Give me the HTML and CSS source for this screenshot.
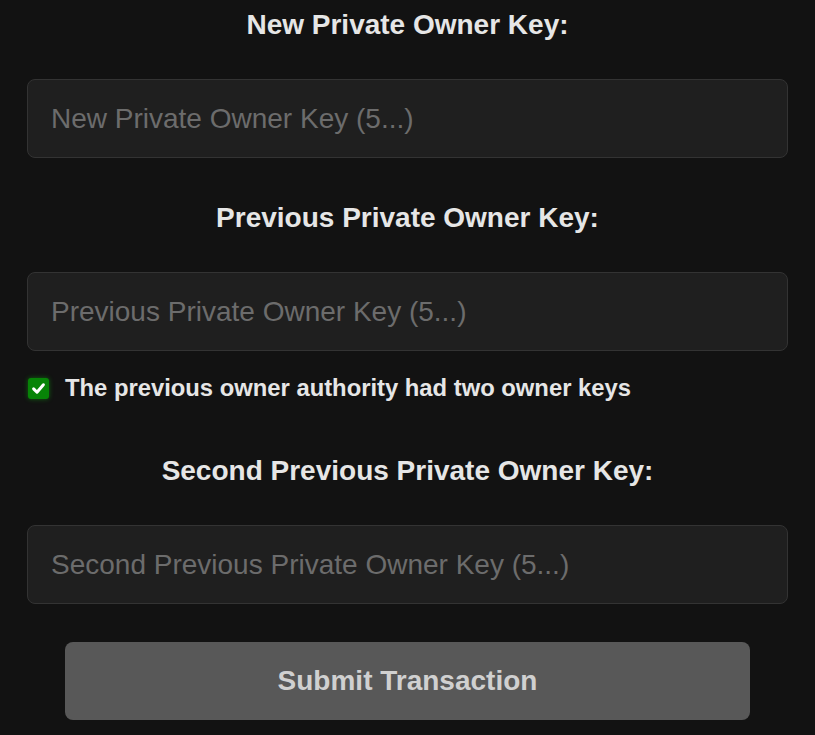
FILE: index.html
```html
<!DOCTYPE html>
<html lang="en">
<head>
  <meta charset="UTF-8" />
  <title>Change Owner Key</title>
  <meta name="viewport" content="width=device-width, initial-scale=1" />
  <link rel="stylesheet" href="styles.css">
</head>
<body>
  <form class="key-form">
    <label class="field-label" for="newKey">New Private Owner Key:</label>
    <input class="key-input" type="text" id="newKey" placeholder="New Private Owner Key (5...)" />

    <label class="field-label" for="prevKey">Previous Private Owner Key:</label>
    <input class="key-input" type="text" id="prevKey" placeholder="Previous Private Owner Key (5...)" />

    <label class="check-row">
      <span class="check-box">
        <svg viewBox="0 0 20 20" width="15" height="15"><path d="M3.5 10.5 L8 15 L16.5 5" fill="none" stroke="#fff" stroke-width="4" stroke-linecap="round" stroke-linejoin="round"/></svg>
      </span>
      <span>The previous owner authority had two owner keys</span>
    </label>

    <label class="field-label" for="secondKey">Second Previous Private Owner Key:</label>
    <input class="key-input" type="text" id="secondKey" placeholder="Second Previous Private Owner Key (5...)" />

    <button type="submit" class="submit-btn">Submit Transaction</button>
  </form>
</body>
</html>
```

FILE: styles.css
```css
body {
  margin: 0;
  background: #121212;
  color: #e6e6e6;
  font-family: 'Liberation Sans', Arial, sans-serif;
}
.key-form {
  display: flex;
  flex-direction: column;
  padding: 0 27px;
}
.field-label {
  display: block;
  text-align: center;
  font-weight: 700;
  font-size: 28px;
  line-height: 32px;
  margin: 9px 0 38px;
}
.key-input {
  box-sizing: border-box;
  width: 100%;
  height: 79px;
  padding: 0 23px;
  background: #1f1f1f;
  border: 1px solid #333;
  border-radius: 8px;
  color: #ddd;
  font-family: inherit;
  font-size: 28px;
  margin-bottom: 35px;
}
.key-input::placeholder {
  color: #6c6c6c;
}
.key-input:focus {
  outline: none;
  border-color: #555;
}
.check-row {
  display: flex;
  align-items: center;
  gap: 16px;
  height: 28px;
  margin: -12px 0 44px 1px;
  font-weight: 700;
  font-size: 23.8px;
  color: #e6e6e6;
  cursor: pointer;
}
.check-box {
  width: 21px;
  height: 21px;
  border-radius: 3px;
  background: #078407;
  box-shadow: 0 0 5px rgba(20, 200, 20, 0.45);
  display: flex;
  align-items: center;
  justify-content: center;
  flex-shrink: 0;
}
.submit-btn {
  align-self: center;
  width: 685px;
  height: 78px;
  margin-top: 3px;
  background: #585858;
  color: #d0d0d0;
  border: none;
  border-radius: 8px;
  font-family: inherit;
  font-weight: 700;
  font-size: 28px;
  cursor: pointer;
}
```
